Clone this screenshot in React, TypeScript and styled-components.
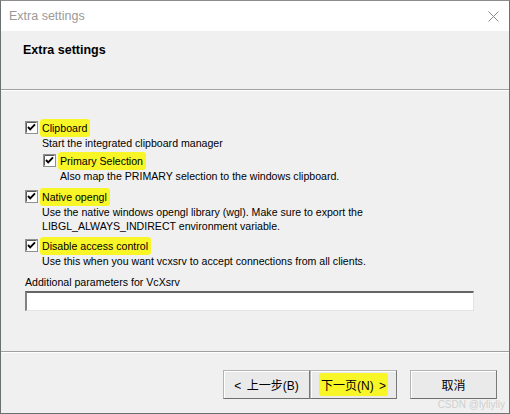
import React from 'react';
import styled, { createGlobalStyle } from 'styled-components';

const GlobalStyle = createGlobalStyle`
  html, body {
    margin: 0;
    padding: 0;
    background: #3b4347;
  }
  * {
    box-sizing: border-box;
  }
`;

const Window = styled.div`
  position: relative;
  width: 510px;
  height: 414px;
  display: flex;
  flex-direction: column;
  background: #f0f0f0;
  border: 1px solid #6b7073;
  border-top-color: #8c8c8c;
  font-family: "Liberation Sans", Arial, sans-serif;
  color: #000;
`;

const TitleBar = styled.div`
  height: 30px;
  flex: 0 0 30px;
  background: #fff;
  display: flex;
  align-items: center;
  justify-content: space-between;
  padding: 0 10px 0 8px;
`;

const TitleText = styled.span`
  font-size: 12.5px;
  color: #9a9a9a;
`;

const CloseButton = styled.div`
  width: 12px;
  height: 12px;
  display: flex;
  align-items: center;
  justify-content: center;
`;

const Header = styled.div`
  height: 58px;
  flex: 0 0 58px;
  padding: 12px 0 0 22px;
  font-size: 12.5px;
  font-weight: bold;
`;

const Separator = styled.div`
  height: 2px;
  flex: 0 0 2px;
  border-top: 1px solid #a0a0a0;
  border-bottom: 1px solid #fff;
`;

const Content = styled.div`
  flex: 1;
  padding: 28px 36px 0 24px;
  display: flex;
  flex-direction: column;
`;

const CheckRow = styled.div<{ $top: number; $indent?: number }>`
  display: flex;
  align-items: center;
  height: 17px;
  margin-top: ${p => p.$top}px;
  padding-left: ${p => p.$indent ?? 0}px;
  font-size: 10.6px;
`;

const Marked = styled.span`
  background: #f9f628;
  border-radius: 3px;
  padding: 2px 3px 2px 2px;
  margin-left: 2px;
  line-height: 14px;
`;

const Desc = styled.div<{ $indent: number }>`
  padding-left: ${p => p.$indent}px;
  font-size: 10.6px;
  line-height: 14px;
`;

const FieldLabel = styled.div`
  margin-top: 7px;
  font-size: 10.6px;
  line-height: 14px;
`;

const TextInput = styled.div`
  margin-top: 2px;
  height: 20px;
  width: 449px;
  background: #fff;
  border: 1px solid #e3e3e3;
  border-top: 2px solid #646464;
  border-left: 2px solid #828282;
`;

const Footer = styled.div`
  flex: 0 0 60px;
  display: flex;
  justify-content: flex-end;
  align-items: flex-start;
  padding: 17px 12px 0 0;
`;

const Button = styled.div<{ $gap?: number }>`
  width: 87px;
  height: 29px;
  margin-left: ${p => p.$gap ?? 0}px;
  display: flex;
  align-items: center;
  justify-content: center;
  background: #eaeaea;
  border: 1px solid #b4b4b4;
  border-right-color: #7a7a7a;
  border-bottom-color: #6e6e6e;
  box-shadow: inset 1px 1px 0 #fff;
  font-family: "Liberation Sans", "Noto Sans CJK SC", sans-serif;
  font-size: 12px;
  word-spacing: 2px;
`;

const ButtonMark = styled.span`
  background: #f9f628;
  border-radius: 3px;
  padding: 3px 2px;
`;

const Watermark = styled.div`
  position: absolute;
  right: 4px;
  bottom: 3px;
  font-family: "Liberation Sans", sans-serif;
  font-size: 10px;
  color: rgba(200, 200, 200, 0.85);
`;

const CheckBox: React.FC = () => (
  <svg width="13" height="13" viewBox="0 0 13 13">
    <rect x="0" y="0" width="13" height="13" fill="#fff" />
    <rect x="0.5" y="0.5" width="12" height="12" fill="none" stroke="#8e8f8f" />
    <path d="M1.5 11.5 V1.5 H11.5" fill="none" stroke="#5a5a5a" />
    <path d="M3 6 L5.2 8.4 L10 3.4" fill="none" stroke="#000" strokeWidth="1.9" />
  </svg>
);

interface OptionData {
  label: string;
  top: number;
  indent: number;
  lines: string[];
}

const options: OptionData[] = [
  { label: 'Clipboard', top: 0, indent: 0, lines: ['Start the integrated clipboard manager'] },
  { label: 'Primary Selection', top: 2, indent: 18, lines: ['Also map the PRIMARY selection to the windows clipboard.'] },
  {
    label: 'Native opengl',
    top: 5,
    indent: 0,
    lines: [
      'Use the native windows opengl library (wgl). Make sure to export the',
      'LIBGL_ALWAYS_INDIRECT environment variable.',
    ],
  },
  { label: 'Disable access control', top: 4, indent: 0, lines: ['Use this when you want vcxsrv to accept connections from all clients.'] },
];

const App: React.FC = () => (
  <>
    <GlobalStyle />
    <Window>
      <TitleBar>
        <TitleText>Extra settings</TitleText>
        <CloseButton>
          <svg width="11" height="11" viewBox="0 0 11 11">
            <path d="M0.5 0.5 L10.5 10.5 M10.5 0.5 L0.5 10.5" stroke="#8a8a8a" strokeWidth="1" fill="none" />
          </svg>
        </CloseButton>
      </TitleBar>
      <Header>Extra settings</Header>
      <Separator />
      <Content>
        {options.map(o => (
          <React.Fragment key={o.label}>
            <CheckRow $top={o.top} $indent={o.indent}>
              <CheckBox />
              <Marked>{o.label}</Marked>
            </CheckRow>
            {o.lines.map(line => (
              <Desc key={line} $indent={o.indent + 17}>{line}</Desc>
            ))}
          </React.Fragment>
        ))}
        <FieldLabel>Additional parameters for VcXsrv</FieldLabel>
        <TextInput />
      </Content>
      <Separator />
      <Footer>
        <Button>&lt; 上一步(B)</Button>
        <Button><ButtonMark>下一页(N) &gt;</ButtonMark></Button>
        <Button $gap={13}>取消</Button>
      </Footer>
      <Watermark>CSDN @lyliyliy</Watermark>
    </Window>
  </>
);

export default App;
